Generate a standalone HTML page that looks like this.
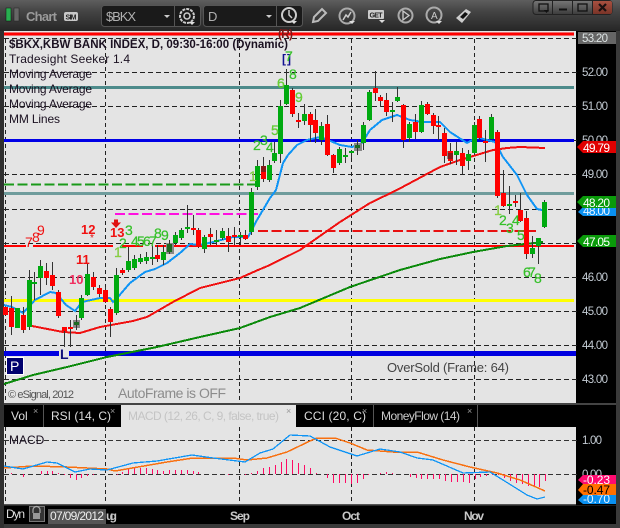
<!DOCTYPE html>
<html><head><meta charset="utf-8"><style>
html,body{margin:0;padding:0;background:#333;width:620px;height:528px;overflow:hidden}
svg{display:block;font-family:"Liberation Sans",sans-serif}
</style></head><body>
<svg width="620" height="528" viewBox="0 0 620 528" xmlns="http://www.w3.org/2000/svg">
<defs><linearGradient id="tb" x1="0" y1="0" x2="0" y2="1"><stop offset="0" stop-color="#5e5e5e"/><stop offset="0.35" stop-color="#454545"/><stop offset="1" stop-color="#262626"/></linearGradient>
<linearGradient id="wb" x1="0" y1="0" x2="0" y2="1"><stop offset="0" stop-color="#777"/><stop offset="1" stop-color="#3c3c3c"/></linearGradient>
<linearGradient id="xb" x1="0" y1="0" x2="0" y2="1"><stop offset="0" stop-color="#a85040"/><stop offset="1" stop-color="#7a3428"/></linearGradient></defs>
<rect width="620" height="528" fill="#3a3a3a"/>
<rect width="620" height="31" fill="url(#tb)"/>
<rect x="0" y="31" width="4" height="497" fill="#303030"/>
<rect x="6" y="8" width="5" height="13" fill="#28b050" stroke="#111" stroke-width=".5"/>
<rect x="14" y="8" width="5" height="13" fill="#666" stroke="#222" stroke-width=".5"/>
<text x="26" y="21" font-size="13" font-weight="bold" fill="#9a9a9a" textLength="31">Chart</text>
<rect x="64" y="12" width="14" height="9" rx="2" fill="#c8c8c8"/><text x="65.5" y="19.5" font-size="7" font-weight="bold" fill="#222" textLength="11">SIM</text>
<rect x="101.500" y="5.500" width="99" height="21" rx="3" fill="#1a1a1a" stroke="#555"/><path d="M174.500 6V26" stroke="#555"/>
<text x="106" y="21" font-size="13" fill="#b0b0b0" textLength="30">$BKX</text><path d="M164 15h6l-3 3z" fill="#ccc"/>
<circle cx="187" cy="16" r="7" fill="none" stroke="#ccc" stroke-width="2" stroke-dasharray="3 1"/><circle cx="187" cy="16" r="3" fill="none" stroke="#ccc" stroke-width="1.500"/><path d="M189 22h6l-3 3z" fill="#ddd"/>
<rect x="203.500" y="5.500" width="99" height="21" rx="3" fill="#1a1a1a" stroke="#555"/><path d="M276.500 6V26" stroke="#555"/>
<text x="208" y="21" font-size="13" fill="#b0b0b0">D</text><path d="M266 15h6l-3 3z" fill="#ccc"/>
<circle cx="289" cy="15" r="7" fill="none" stroke="#ccc" stroke-width="2"/><path d="M289 10v5l3 3" fill="none" stroke="#ccc" stroke-width="1.500"/><path d="M291 21h6l-3 3z" fill="#ddd"/>
<path d="M313 22l1-5 8-8 4 4-8 8z" fill="none" stroke="#bbb" stroke-width="2"/>
<circle cx="347" cy="16" r="7.500" fill="none" stroke="#aaa" stroke-width="2"/><path d="M343 20l3-5 2 2 3-5" fill="none" stroke="#ccc" stroke-width="1.500"/><path d="M349 21h6l-3 3z" fill="#ddd"/>
<rect x="368" y="10" width="16" height="9" rx="1" fill="#ccc"/><text x="369.500" y="17.500" font-size="7" font-weight="bold" fill="#222" textLength="13">GET</text><path d="M379 20h6l-3 3z" fill="#ddd"/>
<circle cx="405.500" cy="15.500" r="7" fill="none" stroke="#aaa" stroke-width="2"/><path d="M403 11l6 4.500-6 4.500z" fill="none" stroke="#ccc" stroke-width="1.300"/>
<circle cx="434" cy="15" r="7.500" fill="none" stroke="#aaa" stroke-width="2"/><text x="431" y="19" font-size="10" fill="#ccc">A</text><path d="M436 21h6l-3 3z" fill="#ddd"/>
<path d="M456 18l10-9 5 3-9 11z" fill="#ccc"/><path d="M460 17l5-5 3 2-5 5z" fill="#111"/>
<rect x="533" y=".500" width="79" height="14" rx="3" fill="url(#wb)" stroke="#222"/>
<rect x="592" y="1" width="20" height="13" rx="2" fill="url(#xb)"/>
<path d="M552.500 1V14M572.500 1V14M592.500 1V14" stroke="#222"/>
<rect x="539" y="4" width="9" height="7" fill="none" stroke="#111" stroke-width="1.300"/><path d="M544 10h5l-2.500 3z" fill="#111"/>
<rect x="559" y="8.500" width="8" height="2" fill="#111"/><rect x="578" y="4" width="9" height="7" fill="none" stroke="#111" stroke-width="1.300"/>
<path d="M599 4l7 7M606 4l-7 7" stroke="#1a1010" stroke-width="2.200"/>

<rect x="576" y="31" width="40" height="474" fill="#000"/>
<rect x="4" y="31" width="572" height="372" fill="#e4e4e4"/>
<g shape-rendering="crispEdges">
<!-- grid -->
<path d="M5.500 32V403M105.500 32V403M239.500 32V403M351.500 32V403M474.500 32V403" stroke="#222" stroke-dasharray="4 3" fill="none"/>
<path d="M4 38.500H578M4 72.500H578M4 106.500H578M4 140.500H578M4 174.500H578M4 209.500H578M4 243.500H578M4 277.500H578M4 311.500H578M4 345.500H578M4 379.500H578" stroke="#222" stroke-dasharray="5 3" fill="none"/>
<!-- levels -->
<rect x="4" y="32" width="570" height="4" fill="#f06a6a"/><rect x="4" y="33" width="570" height="2" fill="#f00"/>
<rect x="4" y="86" width="570" height="3" fill="#4d8b8b"/>
<rect x="4" y="139" width="570" height="3" fill="#0000e6"/>
<path d="M4 184.500H258" stroke="#1a9a1a" stroke-width="2" stroke-dasharray="10 3.500"/>
<rect x="4" y="192" width="570" height="3" fill="#6f9c9c"/>
<path d="M115 214H258" stroke="#ff10e0" stroke-width="2" stroke-dasharray="10 3.500"/>
<path d="M258 231H536" stroke="#e81010" stroke-width="2" stroke-dasharray="10 3.500"/>
<path d="M4 246H26M33 246H113M122 246H143M155 246H574" stroke="#f00" stroke-width="2"/>
<rect x="4" y="299" width="570" height="3" fill="#ffff00"/>
<rect x="4" y="351" width="572" height="5" fill="#0000e0"/>
<!-- MAs -->
<path d="M4 384L33 375 67 367 107 357 157 347 200 337 240 328 270 317 300 308 350 287 400 270 440 259 473 252 507 246 543 242" fill="none" stroke="#0a8a0a" stroke-width="2"/>
<path d="M32 326L63 332 80 333 100 327 133 321 147 317 173 302 200 288 240 278 258 270 270 265 300 250 340 222 370 203 397 190 440 167 460 160 493 150 507 148 520 147 545 148" fill="none" stroke="#f01010" stroke-width="2"/>
<path d="M4 305L12 307 23 313 35 300 50 292 56 293 66 305 75 311 82 302 100 298 110 298 113 302 118 297 130 283 145 272 155 269 167 263 180 253 190 244 200 245 213 242 233 237 248 237 257 220 270 198 276 190 283 163 288 155 297 145 307 140 320 137 328 140 340 145 352 147 362 143 370 130 382 120 397 115 410 120 423 122 440 122 450 132 467 143 477 137 487 140 495 142 503 157 517 175 527 195 537 209 542 210" fill="none" stroke="#0f94f5" stroke-width="2"/>
<!-- gray marks -->
<path d="M73 320h7v8h-7zM166 243h8v11h-8zM354 143h8v8h-8zM447 151h6v8h-6z" fill="#888"/>
<!-- wicks -->
<path d="M11.500 296V335M23.500 307V333M29.500 270V330M34.500 272V300M40.500 260V295M46.500 263V285M52.500 262V290M58.500 290V318M64.500 327V347M70.500 320V347M76.500 315V330M81.500 295V320M87.500 264V296M93.500 272V290M99.500 285V297M105.500 287V303M110.500 307V337M116.500 268V315M122.500 268V275M128.500 247V272M134.500 255V270M140.500 254V264M146.500 252V264M152.500 245V265M157.500 245V262M163.500 245V265M169.500 240V254M175.500 232V245M181.500 228V240M187.500 205V233M193.500 215V235M198.500 228V248M204.500 235V253M210.500 228V245M216.500 230V245M222.500 228V240M228.500 228V252M234.500 227V245M240.500 232V245M245.500 230V240M251.500 188V235M257.500 160V190M263.500 157V182M269.500 160V182M274.500 142V163M280.500 100V163M286.500 69V105M292.500 88V117M298.500 113V128M304.500 104V125M310.500 112V142M315.500 109V143M321.500 122V145M327.500 115V156M333.500 154V173M339.500 147V165M345.500 148V163M351.500 150V158M357.500 140V155M363.500 122V150M369.500 90V121M375.500 71V101M380.500 95V107M386.500 93V116M392.500 102V122M397.500 87V102M403.500 104V148M409.500 122V142M415.500 114V139M421.500 101V133M427.500 102V115M433.500 113V134M438.500 116V140M444.500 128V163M450.500 143V164M456.500 142V165M462.500 148V174M468.500 150V170M474.500 122V155M479.500 116V140M485.500 130V162M491.500 114V140M497.500 130V198M503.500 170V207M509.500 186V214M515.500 195V207M520.500 193V222M526.500 211V259M532.500 236V258M538.500 238V264M544.500 200V228" stroke="#333" fill="none"/>
<!-- red bodies -->
<path d="M5.500 307V315M11.500 308V327M23.500 315V330M46.500 271V278M52.500 275V286M58.500 292V316M64.500 327V331M70.500 327V329M93.500 277V287M99.500 288V294M105.500 290V302M110.500 309V322M122.500 270V273M157.500 255V259M193.500 228V230M198.500 230V247M210.500 234V237M228.500 236V242M234.500 235V237M245.500 235V239M263.500 166V179M292.500 90V114M298.500 120V122M310.500 114V125M315.500 120V133M327.500 124V155M333.500 155V168M375.500 88V93M380.500 97V101M386.500 100V112M403.500 105V140M415.500 122V132M427.500 104V114M433.500 115V126M438.500 125V127M444.500 133V156M450.500 151V161M462.500 153V166M479.500 119V138M485.500 141V143M497.500 132V196M503.500 193V206M515.500 201V203M520.500 210V221M526.500 218V254" stroke="#f00" stroke-width="5" fill="none"/>
<!-- green bodies -->
<path d="M17.500 308V328M29.500 280V327M34.500 282V284M40.500 266V278M76.500 322V324M81.500 298V318M87.500 274V295M116.500 275V313M128.500 261V270M134.500 259V268M140.500 258V262M146.500 257V261M152.500 257V259M163.500 252V260M169.500 244V252M175.500 235V243M181.500 230V238M187.500 227V229M204.500 237V249M216.500 240V242M222.500 231V238M240.500 235V237M251.500 192V232M257.500 166V187M269.500 165V180M274.500 153V161M280.500 106V154M286.500 85V104M304.500 114V121M321.500 126V140M339.500 149V163M345.500 155V157M351.500 151V153M357.500 145V147M363.500 125V143M369.500 92V120M392.500 110V112M397.500 97V101M409.500 124V138M421.500 105V132M456.500 151V155M468.500 154V161M474.500 125V153M491.500 117V139M509.500 204V206M532.500 248V254M538.500 238V246M544.500 202V227" stroke="#00aa10" stroke-width="5" fill="none"/>
<path d="M76.500 322V325M169.500 244V252M357.500 145V148" stroke="#1c6a22" stroke-width="5" fill="none"/>
<path d="M263.500 166V172M450.500 153V159" stroke="#8a1818" stroke-width="5" fill="none"/>
</g>
<!-- legend -->
<g fill="#1a1020" font-size="12"><text x="9" y="48" font-weight="bold" textLength="279" lengthAdjust="spacingAndGlyphs">$BKX,KBW BANK INDEX, D, 09:30-16:00 (Dynamic)</text>
<text x="9" y="63" textLength="121">Tradesight Seeker 1.4</text><text x="9" y="78" textLength="83">Moving Average</text><text x="9" y="93" textLength="83">Moving Average</text><text x="9" y="108" textLength="83">Moving Average</text><text x="9" y="123" textLength="51">MM Lines</text></g>
<text x="278" y="38" font-size="12" fill="#801818" font-weight="bold" textLength="15">(R)</text>
<text x="282" y="63" font-size="12" fill="#101090" font-weight="bold" textLength="9" xml:space="preserve">[ ]</text>
<!-- seeker numbers -->
<g font-size="14" fill="#34c028" stroke="#34c028" stroke-width=".2">
<text x="285" y="61">7</text><text x="289" y="79">8</text><text x="277" y="88" fill="#70d030">6</text><text x="295" y="102" fill="#70d030">9</text><text x="271" y="135" fill="#70d030">5</text>
<text x="253" y="150">2</text><text x="260" y="145">3</text><text x="266" y="152">4</text><text x="249" y="181" fill="#a0d040">1</text>
<text x="114" y="257" fill="#a0d040">1</text><text x="119" y="248">2</text><text x="125" y="235">3</text><text x="131" y="246">4</text><text x="137" y="246">5</text><text x="143" y="246">6</text><text x="149" y="246">7</text><text x="154" y="238">8</text><text x="161" y="240">9</text>
<text x="494" y="215" fill="#a0d040">1</text><text x="499" y="225">2</text><text x="506" y="233">3</text><text x="512" y="225">4</text><text x="517" y="240">5</text><text x="523" y="277">6</text><text x="528" y="277">7</text><text x="534" y="283">8</text></g>
<g font-size="14" fill="#f01010"><text x="25" y="247">7</text><text x="32" y="242">8</text><text x="37" y="235">9</text></g>
<g font-size="13" font-weight="bold" fill="#f01010"><text x="81" y="234">12</text><text x="110" y="237">13</text><text x="76" y="264">11</text><text x="69" y="284" fill="#f03060">10</text></g>
<path d="M114 219.500h4v3h3l-5 5.500-5-5.500h3z" fill="#e01010"/><text x="90" y="241" font-size="10" fill="#e01010">*</text>
<!-- L P -->
<rect x="59" y="349" width="10" height="11" fill="#e4e4e4"/><text x="60" y="359" font-size="14" font-weight="bold" fill="#10107a">L</text>
<rect x="6.500" y="357.500" width="17" height="17" fill="#00006e" stroke="#fff"/><text x="10" y="371" font-size="14" fill="#fff">P</text>
<text x="8" y="398" font-size="11" fill="#555" textLength="66">© eSignal, 2012</text>
<text x="118" y="398" font-size="14" fill="#8c8c8c" textLength="108">AutoFrame is OFF</text>
<text x="387" y="372" font-size="13" fill="#444" textLength="122">OverSold (Frame: 64)</text>
<!-- right axis -->
<path d="M576 32h2v2zM576 40l3-3v9z" fill="#000"/>
<rect x="578" y="32" width="38" height="12" fill="#666"/>
<g font-size="11.500" fill="#c4ccd4" lengthAdjust="spacingAndGlyphs"><text x="582" y="42" fill="#dde4e4" textLength="26">53.20</text><text x="582" y="76" textLength="26">52.00</text><text x="582" y="110" textLength="26">51.00</text><text x="582" y="144" textLength="26">50.00</text><text x="582" y="178" textLength="26">49.00</text><text x="582" y="281" textLength="26">46.00</text><text x="582" y="315" textLength="26">45.00</text><text x="582" y="349" textLength="26">44.00</text><text x="582" y="383" textLength="26">43.00</text></g>
<path d="M577 147l6-6h33v12h-33z" fill="#e00000"/><text x="583" y="152" font-size="12" fill="#fff" textLength="27">49.79</text>
<path d="M578 212l5-5h33v9h-33z" fill="#0a90f0"/><text x="583" y="215" font-size="12" fill="#e8f4ff" textLength="27">48.00</text>
<path d="M577 202l6-6h33v12h-33z" fill="#0a9a0a"/><text x="583" y="207" font-size="12" fill="#fff" textLength="27">48.20</text>
<path d="M577 241l6-6h33v12h-33z" fill="#0a9a0a"/><text x="583" y="246" font-size="12" fill="#fff" textLength="27">47.05</text>
<!-- tabs -->
<rect x="4" y="403" width="612" height="2" fill="#444"/>
<rect x="4" y="405" width="572" height="22" fill="#000"/>
<rect x="121" y="405" width="175" height="22" fill="#e4e4e4"/>
<path d="M43.500 405V427M373.500 405V427M477.500 405V427" stroke="#555"/>
<g font-size="12"><text x="11" y="420" fill="#ddd">Vol</text><text x="51" y="420" fill="#ddd">RSI (14, C)</text><text x="128" y="420" fill="#c4c4c4" textLength="151">MACD (12, 26, C, 9, false, true)</text><text x="304" y="420" fill="#ddd" textLength="62">CCI (20, C)</text><text x="381" y="420" fill="#ccc" textLength="79">MoneyFlow (14)</text></g>
<g font-size="9" fill="#999"><text x="33" y="414">×</text><text x="110" y="414">×</text><text x="286" y="414">×</text><text x="362" y="414">×</text><text x="467" y="414">×</text></g>
<!-- macd panel -->
<rect x="4" y="427" width="572" height="77" fill="#e4e4e4"/>
<g shape-rendering="crispEdges">
<path d="M5.500 427V504M105.500 427V504M239.500 427V510M351.500 427V510M474.500 427V510" stroke="#222" stroke-dasharray="4 3" fill="none"/>
<path d="M4 440.500H578M4 474.500H578" stroke="#333" stroke-dasharray="5 3" fill="none"/>
<path d="M11.500 474V473M23.500 474V477M41.500 474V471M47.500 474V471M52.500 474V471M58.500 474V473M64.500 474V475M70.500 474V478M76.500 474V480M81.500 474V478M87.500 474V476M93.500 474V475M117.500 474V475M122.500 474V472M128.500 474V469M134.500 474V468M140.500 474V468M146.500 474V468M152.500 474V469M157.500 474V470M163.500 474V471M169.500 474V470M175.500 474V470M181.500 474V470M187.500 474V470M193.500 474V471M198.500 474V472M204.500 474V474M228.500 474V475M245.500 474V475M251.500 474V473M257.500 474V471M263.500 474V468M269.500 474V467M275.500 474V465M281.500 474V462M286.500 474V459M292.500 474V460M298.500 474V463M304.500 474V465M310.500 474V468M316.500 474V473M327.500 474V478M333.500 474V483M339.500 474V483M345.500 474V483M351.500 474V484M357.500 474V483M363.500 474V479M368.500 474V475M373.500 474V474M380.500 474V473M386.500 474V472M392.500 474V473M398.500 474V474M410.500 474V477M416.500 474V478M421.500 474V479M427.500 474V479M433.500 474V479M439.500 474V479M445.500 474V481M451.500 474V482M457.500 474V482M463.500 474V482M469.500 474V483M475.500 474V479M480.500 474V477M486.500 474V476M492.500 474V475M498.500 474V475M504.500 474V478M510.500 474V481M516.500 474V483M522.500 474V484M528.500 474V486M534.500 474V487M539.500 474V487M545.500 474V481" stroke="#ff0a64" fill="none"/>
<path d="M4 468L33 466 67 467 107 469 115 471 167 462 193 458 233 458 247 460 267 458 287 452 310 441 317 438 335 438 350 443 367 450 393 452 417 452 443 460 470 467 497 473 520 480 545 491" fill="none" stroke="#f87010" stroke-width="1.500"/>
<path d="M4 466L23 469 47 462 57 463 75 472 90 469 107 470 133 463 157 461 192 455 213 458 245 462 260 453 273 449 290 435 310 436 330 447 357 456 380 449 400 452 417 458 433 460 463 473 490 472 503 480 527 495 537 499 545 497" fill="none" stroke="#0f94f5" stroke-width="1.300"/>
</g>
<text x="9" y="444" font-size="12" fill="#1a1020">MACD</text>
<g font-size="11.500" fill="#c4ccd4"><text x="582" y="444" textLength="20">1.00</text><text x="582" y="478" textLength="20">0.00</text></g>
<path d="M578 480l5-5h33v9h-33z" fill="#ff0a70"/><text x="583" y="484" font-size="12" fill="#fff" textLength="27">-0.23</text>
<path d="M578 500l5-5h33v9h-33z" fill="#0a90f0"/><text x="583" y="503" font-size="12" fill="#e8f4ff" textLength="27">-0.70</text>
<path d="M578 490l5-6h33v11h-33z" fill="#ff7000"/><text x="583" y="494" font-size="12" fill="#000" textLength="27">-0.47</text>
<!-- bottom -->
<rect x="4" y="504" width="572" height="1.500" fill="#555"/>
<rect x="4" y="505.500" width="612" height="18.500" fill="#000"/>
<text x="6" y="518" font-size="12" fill="#ddd" textLength="19">Dyn</text>
<rect x="29.500" y="506.500" width="15" height="15" fill="#333" stroke="#777"/><path d="M33 513v-3a3 3 0 0 1 7 0v3" fill="none" stroke="#aaa" stroke-width="1.200"/><rect x="33" y="513" width="7" height="6" fill="#999"/>
<rect x="48" y="509" width="58" height="15" fill="#555"/>
<text x="50" y="520" font-size="12" fill="#eee" textLength="54">07/09/2012</text>
<g font-size="12" font-weight="bold" fill="#c8c8c8"><text x="106" y="520" textLength="11">ug</text><text x="230" y="520" textLength="20">Sep</text><text x="342" y="520" textLength="18">Oct</text><text x="464" y="520" textLength="20">Nov</text></g>
</svg>
</body></html>
